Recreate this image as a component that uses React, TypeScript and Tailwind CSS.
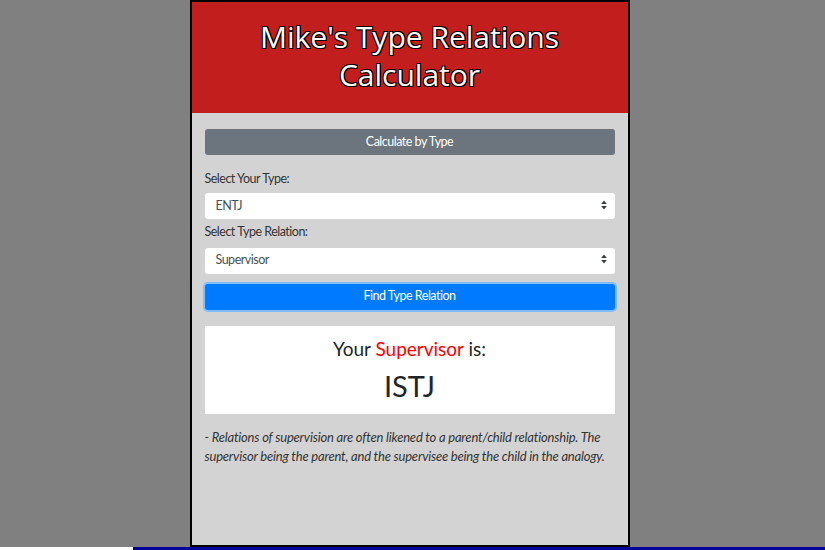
import React, { useState } from "react";

const TYPES = ["ENTJ", "ENTP", "ENFJ", "ENFP", "ESTJ", "ESTP", "ESFJ", "ESFP", "INTJ", "INTP", "INFJ", "INFP", "ISTJ", "ISTP", "ISFJ", "ISFP"];
const RELATIONS = ["Supervisor", "Supervisee", "Duality", "Activity", "Mirror", "Identity"];

function SelectBox({ value, options, onChange }: { value: string; options: string[]; onChange: (v: string) => void }) {
  return (
    <div className="relative">
      <select
        value={value}
        onChange={(e) => onChange(e.target.value)}
        className="w-full h-[26px] appearance-none bg-white rounded-[3px] pl-[11px] pr-8 text-[12.5px] tracking-[-0.5px] text-[#495057] outline-none"
      >
        {options.map((o) => (
          <option key={o}>{o}</option>
        ))}
      </select>
      <svg className="pointer-events-none absolute right-[8px] top-[8px]" width="6" height="10" viewBox="0 0 6 10">
        <path d="M3 0.5 L5.8 4 L0.2 4 Z" fill="#343a40" />
        <path d="M3 9.5 L5.8 6 L0.2 6 Z" fill="#343a40" />
      </svg>
    </div>
  );
}

export default function App() {
  const [type, setType] = useState("ENTJ");
  const [relation, setRelation] = useState("Supervisor");

  return (
    <div className="w-[825px] h-[550px] bg-[#808080] flex flex-col overflow-hidden" style={{ fontFamily: "Lato, 'Open Sans', sans-serif" }}>
      <div className="flex justify-center">
        <div className="mr-[6px] w-[440px] h-[547px] border-2 border-black bg-[#d3d3d3] flex flex-col">
          {/* Header */}
          <div className="h-[111px] bg-[#c21e1e] flex items-center justify-center pb-[3px]">
            <h1
              className="text-white text-[30px] leading-[38px] text-center"
              style={{ fontFamily: "'Open Sans', sans-serif", textShadow: "-1px -1px 0 #000, 1px -1px 0 #000, -1px 1px 0 #000, 1px 1px 0 #000" }}
            >
              Mike's Type Relations
              <br />
              Calculator
            </h1>
          </div>

          {/* Body */}
          <div className="px-[13px] pt-[16px] flex flex-col">
            <button className="h-[26px] bg-[#6c757d] rounded-[3px] text-white text-[12.5px] tracking-[-0.5px]">Calculate by Type</button>

            <label className="mt-[16px] text-[12.5px] tracking-[-0.5px] text-[#333] leading-[16px]">Select Your Type:</label>
            <div className="mt-[5px]">
              <SelectBox value={type} options={TYPES} onChange={setType} />
            </div>

            <label className="mt-[5px] text-[12.5px] tracking-[-0.5px] text-[#333] leading-[16px]">Select Type Relation:</label>
            <div className="mt-[6px]">
              <SelectBox value={relation} options={RELATIONS} onChange={setRelation} />
            </div>

            <button className="mt-[10px] h-[26px] bg-[#007bff] rounded-[3px] text-white text-[12.5px] tracking-[-0.5px] ring-[2px] ring-[#80bdff]">
              Find Type Relation
            </button>

            <div className="mt-[16px] h-[88px] bg-white flex flex-col items-center pt-[10px]">
              <div className="text-[19px] leading-[26px] text-[#212529]">
                Your <span className="text-[#ff0000]">Supervisor</span> is:
              </div>
              <div className="text-[29px] leading-[40px] text-[#212529] mt-[4px]">ISTJ</div>
            </div>

            <p className="mt-[14px] text-[13px] leading-[19px] italic tracking-[-0.2px] text-[#333]">
              - Relations of supervision are often likened to a parent/child relationship. The supervisor being the parent, and the supervisee being the child in the analogy.
            </p>
          </div>
        </div>
      </div>
      <div className="h-[3px] flex">
        <div className="w-[133px] bg-white" />
        <div className="flex-1 bg-[#00009a]" />
      </div>
    </div>
  );
}
